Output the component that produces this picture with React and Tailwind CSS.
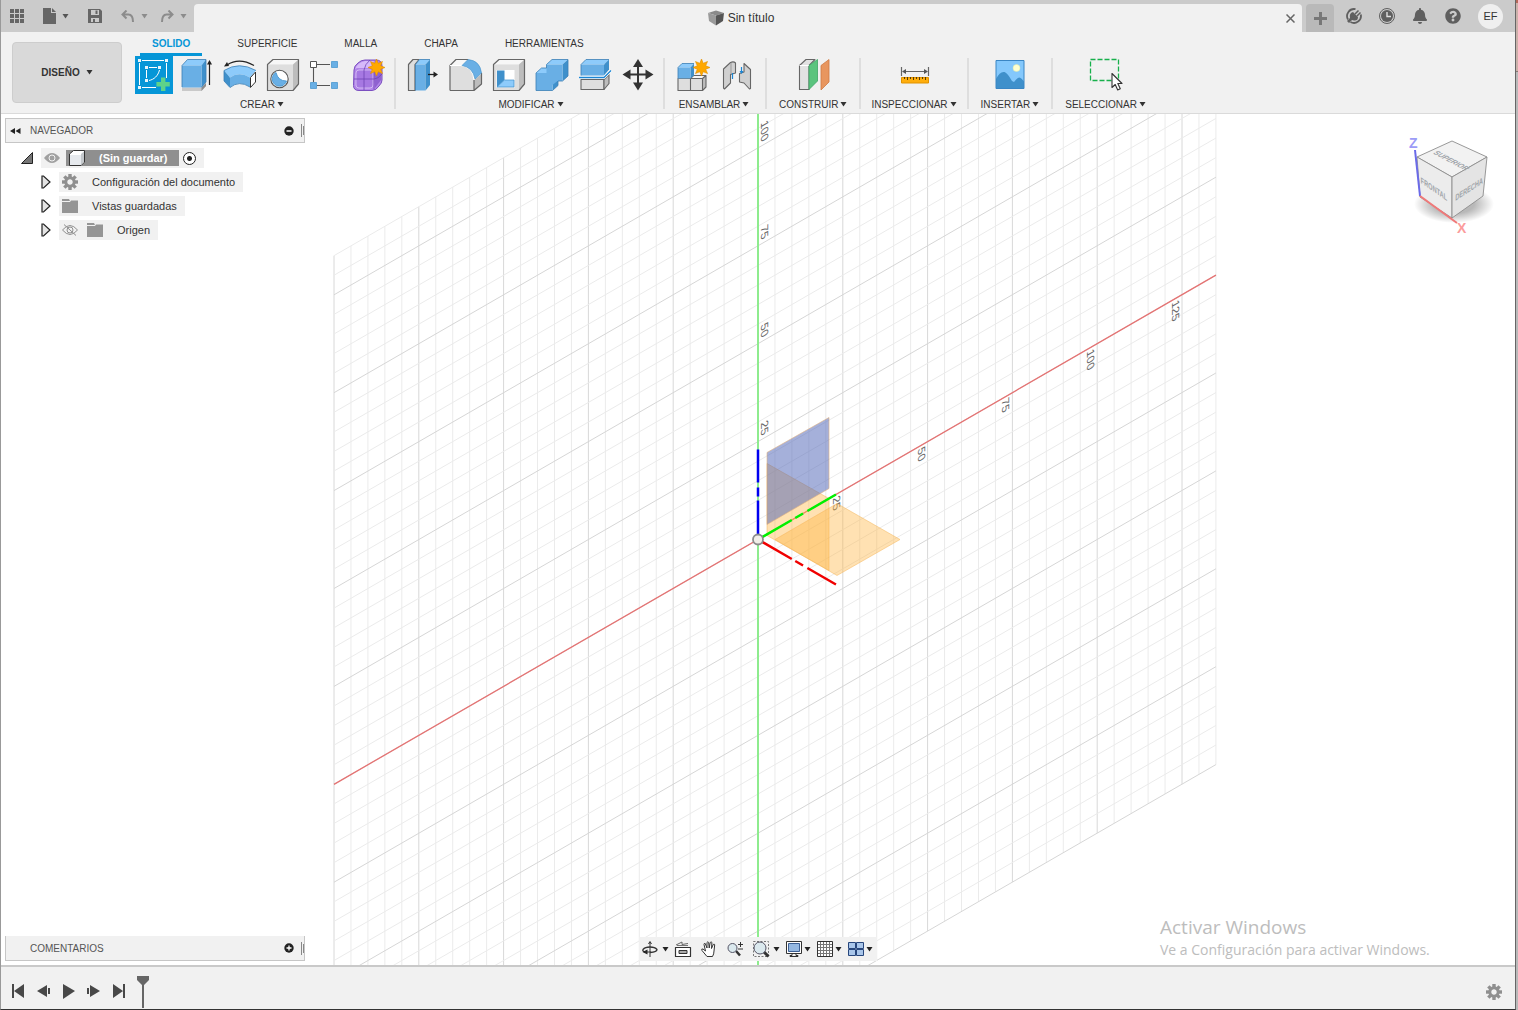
import React from "react";
import { FaBell, FaQuestionCircle } from "react-icons/fa";

const STEP_X = 16.96;
const STEP_Y = 19.58;
const SLOPE = 0.5774;
const LEFT = -25;
const RIGHT = 27;
const STAR = "0,-8.5 1.7,-4.2 6,-6 4.2,-1.7 8.5,0 4.2,1.7 6,6 1.7,4.2 0,8.5 -1.7,4.2 -6,6 -4.2,1.7 -8.5,0 -4.2,-1.7 -6,-6 -1.7,-4.2";

const range = (from, to) => Array.from({ length: to - from + 1 }, (_, i) => from + i);

const Caret = ({ className = "text-[#333]" }) => (
  <svg viewBox="0 0 7 5" className={`w-[7px] h-[5px] shrink-0 ${className}`} fill="currentColor">
    <path d="M0.500 0h6L3.500 4.500z" />
  </svg>
);

const Gear = ({ className }) => (
  <svg viewBox="-8 -8 16 16" className={className}>
    <g fill="#8f8f8f">
      {range(0, 7).map((i) => (
        <rect key={i} x="-1.7" y="-8" width="3.4" height="5" transform={`rotate(${i * 45})`} />
      ))}
    </g>
    <circle r="4.2" fill="none" stroke="#8f8f8f" strokeWidth="3" />
  </svg>
);

/* ---------- ribbon icons, all on a 43x38 cell ---------- */

const Cell = ({ children }) => (
  <svg viewBox="0 0 43 38" className="w-[43px] h-[38px]" strokeLinejoin="round">
    {children}
  </svg>
);

const Star = ({ x, y }) => (
  <polygon points={STAR} transform={`translate(${x} ${y})`} fill="#ffa800" stroke="#e08f00" strokeWidth="0.6" />
);

const SketchIcon = () => (
  <Cell>
    <rect x="2" width="38" height="38" fill="#0696d7" />
    <g stroke="#fff" fill="none" strokeWidth="1">
      <path d="M6.500 7v22M9 4.500h22M9 31.500h14M33.500 7v15M13.500 14v8M16 11.500h8" />
      <path d="M26.500 14C25 20 21 23.500 16 24.500" />
    </g>
    <g fill="#e8f4fb">
      {[[5, 3], [32, 3], [5, 30], [12, 10], [25, 10], [12, 23]].map(([x, y]) => (
        <rect key={`${x}-${y}`} x={x} y={y} width="3" height="3" />
      ))}
    </g>
    <path d="M28 21.500h4.400V26h4.400v4.400h-4.400V35H28v-4.600h-4.600V26H28z" fill="#5fd38a" />
  </Cell>
);

const ExtrudeIcon = () => (
  <Cell>
    <path d="M6 31.500h19.500l4.500-4.500v3l-4.500 5H6z" fill="#c9c9c9" />
    <path d="M25.500 31.500l4.500-4.500v3l-4.500 5z" fill="#8d8d8d" />
    <path d="M6 9.500L11.500 3.500H30l-4.500 6z" fill="#8dcbfb" />
    <path d="M25.500 9.500L30 3.500V26l-4.500 5.500z" fill="#3f90cb" />
    <path d="M6 9.500h19.500v22H6z" fill="#69afe5" />
    <path d="M6 31V9.500L11.500 3.500H30V26l-4.500 5" fill="none" stroke="#3b7fb5" strokeWidth="0.8" />
    <path d="M33.500 29V6" stroke="#222" strokeWidth="1.200" />
    <path d="M31 8.500L33.500 4 36 8.500z" fill="#222" />
  </Cell>
);

const RevolveIcon = () => (
  <Cell>
    <path d="M5 14.500Q20 5 37 14.500L31 21.500Q20 15 11 21.500z" fill="#8dcbfb" />
    <path d="M11 21.500Q20 15 31 21.500V31Q20 24 11 31.500z" fill="#69afe5" />
    <path d="M5 14.500l6 7v10l-6-6.500z" fill="#3f90cb" />
    <path d="M5 14.500Q20 5 37 14.500M5 14.500V25l6 6.500Q20 24 31 31" fill="none" stroke="#3b7fb5" strokeWidth="0.8" />
    <path d="M31.500 21.500l5-5.500v10l-5 5.500z" fill="#fff" stroke="#333" strokeWidth="1" />
    <path d="M8 9Q20 1 35 9.500" fill="none" stroke="#222" strokeWidth="1.200" />
    <path d="M5 10.500l3-4.500 2 4z" fill="#222" />
  </Cell>
);

const GrayBox = () => (
  <>
    <path d="M5.500 8.500L11 3.500h25.500l-5.500 5z" fill="#f7f7f7" />
    <path d="M31 8.500l5.500-5V28L31 34.500z" fill="#bdbdbd" />
    <path d="M5.500 8.500H31v26H5.500z" fill="#dedede" />
    <path d="M5.500 34.500v-26L11 3.500h25.500V28L31 34.500z" fill="none" stroke="#666" strokeWidth="1.200" />
  </>
);

const HoleIcon = () => (
  <Cell>
    <GrayBox />
    <circle cx="17.500" cy="23" r="8.700" fill="#fff" stroke="#555" strokeWidth="1.100" />
    <path d="M14 16.500A7.300 7.300 0 1 0 24.500 25Q16 25 14 16.500z" fill="#69afe5" stroke="#3f90cb" strokeWidth="0.800" />
  </Cell>
);

const PatternIcon = () => (
  <Cell>
    <path d="M12 8.500h13M12 29.500h13M8.500 12v14" stroke="#555" strokeWidth="1.100" />
    <rect x="5.500" y="5.500" width="6" height="6" fill="#fff" stroke="#555" />
    <g fill="#69afe5" stroke="#3f90cb" strokeWidth="0.700">
      <rect x="26.500" y="5.500" width="6" height="6" />
      <rect x="5.500" y="26.500" width="6" height="6" />
      <rect x="26.500" y="26.500" width="6" height="6" />
    </g>
  </Cell>
);

const FormIcon = () => (
  <Cell>
    <path d="M6 14q0-4 4-7 3-3 7-3h11q6 0 6 6v14q0 3-3 6-3 4.500-7 4.500H11q-5.500 0-5.500-5z" fill="#b286e8" stroke="#7b4fc0" strokeWidth="1" />
    <path d="M7 13q3-7 10-8h9l-3 7H9z" fill="#d6b9fa" />
    <path d="M26 13l7-6v17l-6 8z" fill="#8f62d0" />
    <rect x="8" y="14" width="17" height="18" rx="3" fill="#a678e2" stroke="#dcc6f8" strokeWidth="0.800" />
    <path d="M16 14v20M6 23h20q4 0 8-5M16 14q1-6 6-10M26 13v20" fill="none" stroke="#6f44b5" strokeWidth="0.800" />
    <Star x={28.5} y={11.5} />
  </Cell>
);

const PressPullIcon = () => (
  <Cell>
    <path d="M6.500 8.500L11 3.500h6L13 8.500v26H6.500z" fill="#dedede" stroke="#666" strokeWidth="1.200" />
    <path d="M13.500 8.500l4-5H28l-4.500 5z" fill="#8dcbfb" />
    <path d="M13.500 8.500h10v26h-10z" fill="#69afe5" />
    <path d="M23.500 8.500l4.500-5V29l-4.500 5.500z" fill="#3f90cb" />
    <path d="M13.500 34.500v-26l4-5H28" fill="none" stroke="#3b7fb5" strokeWidth="0.800" />
    <path d="M26 18.500h7" stroke="#222" strokeWidth="1.300" />
    <path d="M31.500 15.500l4.500 3-4.500 3z" fill="#222" />
  </Cell>
);

const FilletIcon = () => (
  <Cell>
    <path d="M5 9.500l6-6h13l-7 6z" fill="#f7f7f7" />
    <path d="M29 24l7.500-6v10L29 34.500z" fill="#bdbdbd" />
    <path d="M5 34.500v-25h10Q28 11 29 24v10.500z" fill="#dedede" />
    <path d="M5 34.500V9.500l6-6h12M29 24v10.500M5 34.500h24l7.500-6.500V17" fill="none" stroke="#666" strokeWidth="1.200" />
    <path d="M5 9.500h11Q28 11 29 24" fill="none" stroke="#fff" strokeWidth="1" />
    <path d="M17 9.500L23 3.500Q35 4.500 36.500 17L30 23Q28 11.500 17 9.500z" fill="#69afe5" stroke="#3f90cb" strokeWidth="0.600" />
  </Cell>
);

const ShellIcon = () => (
  <Cell>
    <GrayBox />
    <rect x="8.500" y="14" width="18" height="17.500" fill="#fff" />
    <path d="M9 14.500h7.500V24L9 31z" fill="#3f90cb" />
    <path d="M9 31l7.500-7H26v7z" fill="#8dcbfb" stroke="#3f90cb" strokeWidth="0.700" />
  </Cell>
);

const CombineIcon = () => (
  <Cell>
    <path d="M5 17l5.500-5H16v5zM15.500 8.500l5.500-5h16L31.500 8.500z" fill="#8dcbfb" />
    <path d="M31.500 8.500l5.500-5V20l-5.500 5zM21.500 34.500V25h5.500v4.500z" fill="#3f90cb" />
    <path d="M5 17h10.500V8.500h16V25h-5L21.500 29v5.500H5z" fill="#69afe5" />
    <path d="M5 34.500V17l5.500-5h5V8.500l5.500-5h16V20l-5.500 5H27v4.500l-5.500 5z" fill="none" stroke="#3b7fb5" strokeWidth="0.800" />
  </Cell>
);

const SplitIcon = () => (
  <Cell>
    <path d="M7 23.500h23V33.500H7z" fill="#dedede" stroke="#666" strokeWidth="1.100" />
    <path d="M30 23.500l5-5v9l-5 6z" fill="#bdbdbd" stroke="#666" strokeWidth="1.100" />
    <path d="M7 8.500l5-5h23l-5 5z" fill="#8dcbfb" />
    <path d="M30 8.500l5-5v10l-5 6z" fill="#3f90cb" />
    <path d="M7 8.500h23v11H7z" fill="#69afe5" />
    <path d="M7 19.500v-11l5-5h23" fill="none" stroke="#3b7fb5" strokeWidth="0.800" />
    <path d="M5 21.500h25l7-7" fill="none" stroke="#fff" strokeWidth="3" />
    <path d="M5 21.500h25l7-7" fill="none" stroke="#1c86d4" strokeWidth="1.300" />
  </Cell>
);

const MoveIcon = () => (
  <Cell>
    <path d="M21 8v21M10 18.500h22" stroke="#333" strokeWidth="2" />
    <path d="M21 3l5 8H16zM21 34.500l5-8H16zM5.500 18.500l8-5v10zM36.500 18.500l-8-5v10z" fill="#333" />
  </Cell>
);

const ComponentIcon = () => (
  <Cell>
    <path d="M7 22.500h12.500v12H7zM19.500 22.500h12v12h-12z" fill="#dedede" />
    <path d="M19.500 22.500l3-3H35l-3.500 3z" fill="#f7f7f7" />
    <path d="M31.500 22.500l3.500-3V31l-3.500 3.500z" fill="#bdbdbd" />
    <path d="M7 22.500h24.500v12H7zM19.500 22.500v12M22 19.500h13V31l-3.500 3.500M31.500 22.500l3.500-3M19.500 22.500l3-3" fill="none" stroke="#666" strokeWidth="1.100" />
    <path d="M7 11.500l4-4h12l-3.500 4z" fill="#8dcbfb" />
    <path d="M19.500 11.500l3.500-4v12l-3.500 3z" fill="#3f90cb" />
    <path d="M7 11.500h12.500v11H7z" fill="#69afe5" />
    <path d="M7 22.500v-11l4-4h12" fill="none" stroke="#3b7fb5" strokeWidth="0.800" />
    <Star x={30.5} y={11.5} />
  </Cell>
);

const JointIcon = () => (
  <Cell>
    <g fill="#d0d0d0" stroke="#666" strokeWidth="1.100">
      <path d="M9.500 13l7-6.500q3-1.500 5 .5v10l-5 1.500V27l-6 6-1-1z" />
      <path d="M30 7.500l6.500 6v19l-1 .5L30 27l-4.500-1v-8.500L30 16z" />
    </g>
    <path d="M17 7v11" stroke="#999" />
    <path d="M18.500 17v6M27.500 11v6" stroke="#1c86d4" strokeWidth="1.200" />
    <path d="M25.500 15h4l-2 3z" fill="#1c86d4" />
  </Cell>
);

const PlaneIcon = () => (
  <Cell>
    <path d="M7.500 9.500L14 3.500h9L17 9.500v24H7.500z" fill="#e2e2e2" stroke="#666" strokeWidth="1.100" />
    <path d="M7.500 9.500H17" stroke="#fff" />
    <path d="M17 9.500l8.500-6V25L17 33.500z" fill="#5bc47e" stroke="#3da565" strokeWidth="0.800" />
    <path d="M29 9.500l8-6V26l-8 8z" fill="#e8965f" stroke="#cf7a42" strokeWidth="0.800" />
  </Cell>
);

const MeasureIcon = () => (
  <Cell>
    <path d="M8.500 11v9M35.500 11v9M10 15.500h24" stroke="#666" strokeWidth="1.200" />
    <path d="M9 15.500l4-2.500v5zM35 15.500L31 13v5z" fill="#555" />
    <rect x="8.500" y="21.500" width="27" height="5.500" fill="#ffae0c" stroke="#e09300" />
    <path d="M11.500 21v2M14.500 21v3M17.500 21v2M20.500 21v3M23.500 21v2M26.500 21v3M29.500 21v2M32.500 21v3" stroke="#5a3b00" />
  </Cell>
);

const ImageIcon = () => (
  <Cell>
    <rect x="8" y="4.500" width="28" height="28" fill="#84c8fc" />
    <path d="M8 23q4-8 8.500-7 3 1 7.500 9l2 1q3-4 5-4.500 2 0 5 4v7H8z" fill="#3f90cb" />
    <circle cx="28.500" cy="12" r="3.500" fill="#ffffcf" stroke="#dfe8a8" strokeWidth="0.500" />
    <rect x="8" y="4.500" width="28" height="28" fill="none" stroke="#3a86c4" />
  </Cell>
);

const SelectIcon = () => (
  <Cell>
    <rect x="6.500" y="3.500" width="28" height="21" fill="none" stroke="#17b04b" strokeWidth="1.300" strokeDasharray="5 2" />
    <path d="M28 17.500v14l3.200-3 2.500 5.500 2.600-1.200-2.500-5.300H38z" fill="#fff" stroke="#333" strokeWidth="1.100" />
  </Cell>
);

const GROUPS = [
  {
    label: "CREAR",
    pad: "pl-1.5 pr-[3px]",
    tools: [["Crear boceto", SketchIcon], ["Extruir", ExtrudeIcon], ["Revolución", RevolveIcon], ["Agujero", HoleIcon], ["Patrón", PatternIcon], ["Crear forma", FormIcon]],
  },
  {
    label: "MODIFICAR",
    pad: "pl-1.5 pr-[3px]",
    tools: [["Pulsar/tirar", PressPullIcon], ["Empalme", FilletIcon], ["Vaciado", ShellIcon], ["Combinar", CombineIcon], ["Dividir cuerpo", SplitIcon], ["Mover", MoveIcon]],
  },
  { label: "ENSAMBLAR", pad: "pl-1.5 pr-2", tools: [["Nuevo componente", ComponentIcon], ["Unión", JointIcon]] },
  { label: "CONSTRUIR", pad: "px-3", tools: [["Plano de desfase", PlaneIcon]] },
  { label: "INSPECCIONAR", pad: "px-2.5", tools: [["Medir", MeasureIcon]] },
  { label: "INSERTAR", pad: "px-3", tools: [["Insertar imagen", ImageIcon]] },
  { label: "SELECCIONAR", pad: "px-3", tools: [["Seleccionar", SelectIcon]] },
];

const TABS = ["SOLIDO", "SUPERFICIE", "MALLA", "CHAPA", "HERRAMIENTAS"];

const TitleBar = () => (
  <header className="flex items-end h-8 bg-[#cbcbcb]">
    <div className="flex items-center w-[193px] h-full pl-[9px] gap-[19px] text-[#666]">
      <button type="button" aria-label="Panel de datos">
        <svg viewBox="0 0 14 14" className="size-3.5 block" fill="currentColor">
          {[0, 5, 10].map((x) => [0, 5, 10].map((y) => <rect key={`${x}${y}`} x={x} y={y} width="4" height="4" />))}
        </svg>
      </button>
      <button type="button" aria-label="Archivo" className="flex items-center gap-1.5">
        <svg viewBox="0 0 13 16" className="w-[13px] h-4" fill="currentColor">
          <path d="M0 0h8v5h5v11H0zM9 0l4 4H9z" />
        </svg>
        <Caret className="text-[#555]" />
      </button>
      <button type="button" aria-label="Guardar">
        <svg viewBox="0 0 14 14" className="size-3.5 block">
          <path d="M0 0h12l2 2v12H0z" fill="#666" />
          <path d="M3 1h8v5H3zM3 9h8v4H3z" fill="#cbcbcb" />
          <path d="M7.500 1.500h2v3.500h-2zM5 10h2v3H5z" fill="#666" />
        </svg>
      </button>
      <div className="flex gap-[13px] text-[#8c8c8c]">
        <button type="button" aria-label="Deshacer" className="flex items-center gap-[7px]">
          <svg viewBox="0 0 13 12" className="w-[13px] h-3" fill="none" stroke="currentColor" strokeWidth="2">
            <path d="M5.500 0.500L1.500 4.500l4 4M2 4.500h5.500q4.500 0 4.500 7.500" />
          </svg>
          <Caret className="text-[#8c8c8c]" />
        </button>
        <button type="button" aria-label="Rehacer" className="flex items-center gap-1.5">
          <svg viewBox="0 0 13 12" className="w-[13px] h-3" fill="none" stroke="currentColor" strokeWidth="2">
            <path d="M7.500 0.500l4 4-4 4M11 4.500H5.500Q1 4.500 1 12" />
          </svg>
          <Caret className="text-[#8c8c8c]" />
        </button>
      </div>
    </div>
    <div className="flex flex-1 items-center h-7 pl-2.5 rounded-t bg-[#f1f1f1]">
      <div className="flex flex-1 items-center justify-center gap-1 text-xs text-[#333]">
        <svg viewBox="0 0 16 16" className="size-4">
          <path d="M0 3l8-2.500L16 3 8 5.500z" fill="#8a8a8a" />
          <path d="M0 3l8 2.500V15.500L1 11z" fill="#9a9a9a" />
          <path d="M16 3L8 5.500V15.500l7-4.500z" fill="#555" />
        </svg>
        <span>Sin título</span>
      </div>
      <button type="button" aria-label="Cerrar" className="flex items-center justify-center w-6 h-7">
        <svg viewBox="0 0 9 9" className="size-[9px]" stroke="#666" strokeWidth="1.500">
          <path d="M0.500 0.500l8 8M8.500 0.500l-8 8" />
        </svg>
      </button>
    </div>
    <button type="button" aria-label="Nuevo diseño" className="flex items-center justify-center w-7 h-7 ml-1 rounded-t bg-[#b9b9b9]">
      <svg viewBox="0 0 13 13" className="size-[13px]" stroke="#777" strokeWidth="3">
        <path d="M6.500 0v13M0 6.500h13" />
      </svg>
    </button>
    <div className="flex items-center self-center gap-[17px] pl-3 pr-3 text-[#5f5f5f]">
      <button type="button" aria-label="Extensiones">
        <svg viewBox="0 0 16 16" className="size-4 block" fill="none">
          <path d="M9.500 1.200A7 7 0 0 0 2 11.500M4.500 14A7 7 0 0 0 14.800 6.500" stroke="currentColor" strokeWidth="1.800" />
          <path d="M7 4L12 9q0 4-4 3.500L6 12l-3 3-2-2 3-3Q3 5 7 4z" fill="currentColor" />
          <path d="M9 6l3.500-3.500M11 8l3.500-3.500" stroke="currentColor" strokeWidth="1.500" />
        </svg>
      </button>
      <button type="button" aria-label="Estado del trabajo">
        <svg viewBox="0 0 16 16" className="size-4 block">
          <circle cx="8" cy="8" r="7.500" fill="none" stroke="currentColor" />
          <circle cx="8" cy="8" r="6" fill="currentColor" />
          <path d="M8 4v4.500h4" fill="none" stroke="#e0e0e0" strokeWidth="1.400" />
        </svg>
      </button>
      <button type="button" aria-label="Notificaciones"><FaBell className="size-4" /></button>
      <button type="button" aria-label="Ayuda"><FaQuestionCircle className="size-4" /></button>
      <button type="button" className="size-[25px] rounded-full bg-[#efefef] text-[11px] text-[#333]">EF</button>
    </div>
  </header>
);

const Ribbon = () => (
  <div className="flex h-[82px] border-b border-[#dadada] bg-[#f1f1f1]">
    <button
      type="button"
      className="flex items-center justify-center gap-1.5 w-[110px] h-[61px] mt-2.5 ml-[11px] rounded border border-[#cdcdcd] bg-[#d9d9d9] text-[10px] font-bold text-[#333]"
    >
      DISEÑO <Caret />
    </button>
    <div className="ml-[5px]">
      <nav className="flex h-6 ml-[13px] gap-[23px]">
        {TABS.map((tab, i) => (
          <button
            key={tab}
            type="button"
            className={
              i === 0
                ? "h-6 px-3 pt-0.5 border-b-3 border-[#0696d7] text-[10px] font-bold text-[#0696d7]"
                : "h-6 px-3 pt-0.5 border-b-3 border-transparent text-[10px] text-[#333]"
            }
          >
            {tab}
          </button>
        ))}
      </nav>
      <div className="flex">
        {GROUPS.map(({ label, pad, tools }) => (
          <div key={label} className="flex group">
            <div className={`flex flex-col items-center ${pad}`}>
              <div className="flex">
                {tools.map(([name, Icon]) => (
                  <button key={name} type="button" aria-label={name}><Icon /></button>
                ))}
              </div>
              <button type="button" className="flex items-center gap-0.5 h-5 text-[10px] text-[#333] whitespace-nowrap">
                {label} <Caret />
              </button>
            </div>
            <div className="w-0.5 h-[51px] mt-0.5 bg-[#dedede] group-last:hidden" />
          </div>
        ))}
      </div>
    </div>
  </div>
);

const AxisLabel = ({ x, y, anchor, children }) => (
  <text transform={`matrix(0 1 -0.866 0.5 ${x} ${y})`} textAnchor={anchor} fontSize="12" fill="#686868">
    {children}
  </text>
);

const AXIS_DASH = "39 4 9 5 33";

const Viewport = () => (
  <svg viewBox="-757 -425 1514 850" className="absolute inset-0 size-full overflow-visible" fill="none">
    {range(LEFT, RIGHT).map((i) => {
      const x = i * STEP_X;
      return (
        <line
          key={i}
          x1={x}
          x2={x}
          y1={-SLOPE * x - 27 * STEP_Y}
          y2={-SLOPE * x + 25 * STEP_Y}
          stroke={i % 5 === 0 ? "#d8d8d8" : "#ebebeb"}
        />
      );
    })}
    {range(-27, 25).map((i) => (
      <line
        key={i}
        x1={LEFT * STEP_X}
        x2={RIGHT * STEP_X}
        y1={-SLOPE * LEFT * STEP_X + i * STEP_Y}
        y2={-SLOPE * RIGHT * STEP_X + i * STEP_Y}
        stroke={i % 5 === 0 ? "#d6d6d6" : "#ebebeb"}
      />
    ))}
    <line x1="0" x2="0" y1={-27 * STEP_Y} y2={25 * STEP_Y} stroke="#8eec8e" strokeWidth="2" />
    <line
      x1={LEFT * STEP_X}
      x2={RIGHT * STEP_X}
      y1={-SLOPE * LEFT * STEP_X}
      y2={-SLOPE * RIGHT * STEP_X}
      stroke="#e57373"
      strokeWidth="1.300"
    />
    {[1, 2, 3, 4].map((n) => (
      <AxisLabel key={n} x={3} y={-n * 5 * STEP_Y - 5} anchor="end">{n * 25}</AxisLabel>
    ))}
    {[1, 2, 3, 4, 5].map((n) => (
      <AxisLabel key={n} x={n * 5 * STEP_X - 10} y={-SLOPE * n * 5 * STEP_X + 8} anchor="start">{n * 25}</AxisLabel>
    ))}
    <g fill="#ffb53e" fillOpacity="0.400" stroke="#f5b65a" strokeOpacity="0.500">
      <polygon points="9,-76 71,-41 71,31 9,-4" />
      <polygon points="17,0 79,-36 142,0 79,36" />
    </g>
    <polygon points="71,-122 9,-87 9,-15 71,-51" fill="#4b61b5" fillOpacity="0.500" stroke="#e0b080" strokeOpacity="0.600" />
    <g strokeWidth="2.500" strokeDasharray={AXIS_DASH}>
      <path d="M0 0V-90" stroke="#0000f0" />
      <path d="M0 0L78 -45" stroke="#00f000" />
      <path d="M0 0L78 45" stroke="#f00000" />
    </g>
    <circle r="5" fill="#f1eee8" stroke="#8c8c8c" strokeWidth="1.800" />
  </svg>
);

const ViewCube = () => (
  <svg viewBox="0 0 110 110" className="absolute top-4 right-[5px] size-[110px]">
    <defs>
      <radialGradient id="cube-shadow">
        <stop offset="0.500" stopColor="#000" stopOpacity="0.280" />
        <stop offset="1" stopColor="#000" stopOpacity="0" />
      </radialGradient>
    </defs>
    <ellipse cx="54" cy="74" rx="40" ry="19" fill="url(#cube-shadow)" />
    <g stroke="#8d8d8d" strokeWidth="0.900" strokeLinejoin="round">
      <polygon points="52,11 87,27 52,47 17,27" fill="#f2f2f2" />
      <polygon points="17,27 52,47 52,88 20,67" fill="#ececec" />
      <polygon points="87,27 52,47 52,88 83,66" fill="#e4e4e4" />
    </g>
    <g fill="#a0a4a9" fontSize="8" fontWeight="bold" textAnchor="middle">
      <text transform="matrix(0.79 0.42 -0.9 0.5 49 32)">SUPERIOR</text>
      <text transform="matrix(0.7 0.48 0.04 1.1 34 62)">FRONTAL</text>
      <text transform="matrix(0.7 -0.45 -0.04 1.1 69 62)">DERECHA</text>
    </g>
    <path d="M15 20L20 66" stroke="#6a6ae8" strokeWidth="2" />
    <path d="M20 66L57 93" stroke="#f07878" strokeWidth="2" />
    <text x="9" y="18" fontSize="14" fontWeight="bold" fill="#9c9cf7">Z</text>
    <text x="57" y="103" fontSize="14" fontWeight="bold" fill="#fb9c9c">X</text>
  </svg>
);

const Grip = () => (
  <svg viewBox="0 0 3 13" className="w-[3px] h-[13px] ml-[7px]" stroke="#888">
    <path d="M0.500 0v13M2.500 2v9" />
  </svg>
);

const Folder = () => (
  <svg viewBox="0 0 16 14" className="w-4 h-3.5" fill="#959595">
    <path d="M0 0h7l1 2H0zM0 3h8l1-1.500h7V14H0z" />
  </svg>
);

const Expand = () => (
  <button type="button" aria-label="Expandir" className="w-[18px] shrink-0">
    <svg viewBox="0 0 10 14" className="w-2.5 h-3.5 block" fill="#e4e4e4" stroke="#222" strokeWidth="1.200">
      <path d="M1 1h1.500L9 7l-6.500 6H1z" />
    </svg>
  </button>
);

const Eye = ({ off }) => (
  <svg viewBox="0 0 16 12" className="w-4 h-3">
    {off ? (
      <g fill="none" stroke="#8f8f8f">
        <path d="M0.500 6Q8-3 15.500 6 8 15 0.500 6zM2 0.500L14 11.500" />
        <circle cx="8" cy="6" r="3" />
      </g>
    ) : (
      <g>
        <path d="M0 6Q8-4 16 6 8 16 0 6z" fill="#a0a0a0" />
        <circle cx="8" cy="6" r="3" fill="#a0a0a0" stroke="#f1f1f1" />
      </g>
    )}
  </svg>
);

const TreeRow = ({ icons, label }) => (
  <li className="flex items-center h-6 pl-9">
    <Expand />
    <div className="flex items-center h-5 pl-[3px] pr-2 bg-[#f1f1f1]">
      {icons}
      <span className="ml-3.5 text-[11px] text-[#333]">{label}</span>
    </div>
  </li>
);

const Navigator = () => (
  <aside className="absolute top-1 left-1 w-[300px]">
    <div className="flex items-center h-[25px] pl-1 border border-[#c6c6c6] bg-[#f1f1f1]">
      <button type="button" aria-label="Contraer panel">
        <svg viewBox="0 0 11 6" className="w-[11px] h-1.5 block" fill="#222">
          <path d="M5 0v6L0 3zM10.500 0v6L5.500 3z" />
        </svg>
      </button>
      <h2 className="flex-1 ml-[9px] text-[10px] text-[#555]">NAVEGADOR</h2>
      <button type="button" aria-label="Minimizar">
        <svg viewBox="0 0 10 10" className="size-2.5 block">
          <circle cx="5" cy="5" r="4.700" fill="#222" />
          <path d="M2.500 5h5" stroke="#fff" strokeWidth="1.500" />
        </svg>
      </button>
      <Grip />
    </div>
    <ul className="mt-[3px]">
      <li className="flex items-center h-6 pl-4">
        <button type="button" aria-label="Contraer" className="w-5">
          <svg viewBox="0 0 12 12" className="size-3 block">
            <path d="M0.500 11.500h11V0.500z" fill="#777" stroke="#222" />
          </svg>
        </button>
        <div className="flex items-center h-5 pl-[3px] pr-2 bg-[#f1f1f1]">
          <Eye />
          <div className="flex items-center h-4 ml-1.5 pl-[3px] pr-3 bg-[#8f8f8f]">
            <svg viewBox="0 0 16 16" className="size-4" strokeLinejoin="round">
              <path d="M0.500 4l4-3.500h11V12l-3.500 3.500H0.500z" fill="#fff" stroke="#333" />
              <path d="M12 4v11l3-3V1.500z" fill="#c4c8cc" />
              <path d="M1 5h11v10H1z" fill="#e6e9ed" />
            </svg>
            <span className="ml-3.5 text-[11px] font-bold text-white">(Sin guardar)</span>
          </div>
          <input
            type="radio"
            aria-label="Activar componente"
            defaultChecked
            className="appearance-none size-[13px] ml-1 rounded-full border border-[#222] bg-[radial-gradient(#222_0_2px,#fff_3px)]"
          />
        </div>
      </li>
      <TreeRow icons={<Gear className="size-4" />} label="Configuración del documento" />
      <TreeRow icons={<Folder />} label="Vistas guardadas" />
      <TreeRow icons={<div className="flex items-center gap-[9px]"><Eye off /><Folder /></div>} label="Origen" />
    </ul>
  </aside>
);

const Comments = () => (
  <section className="absolute bottom-1 left-1 flex items-center w-[300px] h-[25px] pl-6 border border-t-0 border-[#c6c6c6] bg-[#f1f1f1]">
    <h2 className="flex-1 text-[10px] text-[#555]">COMENTARIOS</h2>
    <button type="button" aria-label="Añadir comentario">
      <svg viewBox="0 0 10 10" className="size-2.5 block">
        <circle cx="5" cy="5" r="4.700" fill="#222" />
        <path d="M2.500 5h5M5 2.500v5" stroke="#fff" strokeWidth="1.300" />
      </svg>
    </button>
    <Grip />
  </section>
);

const ViewTool = ({ name, menu, className, children }) => (
  <button type="button" aria-label={name} className={`flex items-center ${className}`}>
    <svg viewBox="0 0 18 18" className="size-[18px]" fill="none" stroke="#333" strokeLinejoin="round">
      {children}
    </svg>
    {menu && <Caret className="text-[#222]" />}
  </button>
);

const ViewBar = () => (
  <div className="absolute bottom-1 left-1/2 -translate-x-1/2 flex items-center w-[238px] h-6 pl-0.5 bg-[#f1f1f1]">
    <ViewTool name="Orbitar" menu className="gap-[3px] mr-[5px]">
      <path d="M9 2v15M7.500 4L9 1.500 10.500 4" />
      <path d="M4 12Q1 11 2 9.500 4 7 9 7t7 2.500Q16 12 9 12.500" strokeWidth="1.300" />
      <path d="M6.500 9.500L1.500 12l5 2.500z" fill="#222" stroke="none" />
      <path d="M4 12h6" />
    </ViewTool>
    <ViewTool name="Mirar a" className="mr-2">
      <path d="M1.500 7.500h15v9h-15z" fill="#fff" strokeWidth="1.200" />
      <path d="M5 10.500h8v3H5z" fill="#aaa" />
      <path d="M2 5l6-3v2.500l6-1" stroke="#666" />
      <path d="M3 5.500h11" stroke="#777" />
    </ViewTool>
    <ViewTool name="Encuadre" className="mr-2">
      <path
        d="M7 16.500L2 10.500q-1-2 1-1.500l2.500 2L4 4.500q0-1.500 1.200-1L7 8V2.500q.8-1.500 1.700 0L9.200 8l1-5.500q1-1.300 1.700 0L11.500 8.500 13.200 4.500q1.200-1 1.500.3L14 11q0 3-1.500 5.500z"
        fill="#fff"
      />
    </ViewTool>
    <ViewTool name="Zoom" className="mr-2">
      <path d="M10 11l4 4.500" strokeWidth="2.500" />
      <circle cx="6.500" cy="8" r="4.500" fill="#dbe9ee" stroke="#556" />
      <path d="M12 4.500h5M14.500 2v5M12 9h5" />
    </ViewTool>
    <ViewTool name="Ajustar" menu className="gap-[3px] mr-[5px]">
      <rect x="1.500" y="1.500" width="15" height="15" stroke="#777" strokeDasharray="2 1.500" />
      <path d="M12 12l4.500 4.500" strokeWidth="3" />
      <circle cx="8" cy="8" r="6" fill="#dbe9ee" stroke="#556" />
    </ViewTool>
    <ViewTool name="Configuración de visualización" menu className="gap-px mr-[5px]">
      <path d="M1.500 1.500h15v12h-15z" fill="#fff" />
      <path d="M3.500 3.500h11v8h-11z" fill="#95b8e2" stroke="#3c5f94" />
      <path d="M7 13.500v2h-2v1h8v-1h-2v-2" />
    </ViewTool>
    <ViewTool name="Rejilla y forzado de cursor" menu className="gap-px mr-[5px]">
      <path d="M1.500 1.500h15v15h-15z" fill="#fff" />
      <path d="M4.500 2v14M7.500 2v14M10.500 2v14M13.500 2v14M2 4.500h14M2 7.500h14M2 10.500h14M2 13.500h14" stroke="#777" />
    </ViewTool>
    <ViewTool name="Ventanas gráficas" menu className="gap-px">
      <g fill="#a9c6ea" stroke="#27467c">
        <rect x="1.500" y="2.500" width="7" height="6" />
        <rect x="9.500" y="2.500" width="7" height="6" />
        <rect x="1.500" y="9.500" width="7" height="6" />
        <rect x="9.500" y="9.500" width="7" height="6" />
      </g>
    </ViewTool>
  </div>
);

const PLAYBACK = [
  ["Ir al inicio", "M0 0h2v14H0zM12 0v14L2 7z"],
  ["Retroceder", "M10 1v12L0 7zM11 4h2v6h-2z"],
  ["Reproducir", "M1 0v15l12-8z"],
  ["Avanzar", "M3 1v12L13 7zM0 4h2v6H0z"],
  ["Ir al final", "M11 0h2v14h-2zM1 0v14L11 7z"],
];

const Timeline = () => (
  <footer className="flex items-center justify-between h-[44px] pl-[11px] pr-[13px] border-t-2 border-[#c9c9c9] bg-[#f1f1f1]">
    <div className="flex items-center gap-3">
      {PLAYBACK.map(([name, d]) => (
        <button key={name} type="button" aria-label={name} className="mt-[7px]">
          <svg viewBox="0 0 13 15" className="w-[13px] h-[15px] block" fill="#484848"><path d={d} /></svg>
        </button>
      ))}
      <svg viewBox="0 0 12 32" className="w-3 h-8 mt-2" fill="#666">
        <path d="M0 0h12v4L7 9v23H5V9L0 4z" />
      </svg>
    </div>
    <button type="button" aria-label="Preferencias de línea de tiempo" className="mt-[7px]">
      <Gear className="size-4 block" />
    </button>
  </footer>
);

const App = () => (
  <div className="flex h-screen overflow-hidden bg-[#b9b9b9] font-['Liberation_Sans',Arial,sans-serif]">
    <div className="flex flex-col flex-1 min-w-0 border-l border-r border-b border-l-[#999] border-r-[#666] border-b-[#333]">
      <TitleBar />
      <Ribbon />
      <main className="relative flex-1 overflow-hidden bg-white">
        <Viewport />
        <Navigator />
        <ViewCube />
        <Comments />
        <ViewBar />
        <div className="absolute right-20 bottom-1 w-[275px] font-['Open_Sans','Noto_Sans',sans-serif] text-[#bdbdbd] whitespace-nowrap">
          <p className="text-[19px] leading-6">Activar Windows</p>
          <p className="text-sm leading-[22px]">Ve a Configuración para activar Windows.</p>
        </div>
      </main>
      <Timeline />
    </div>
    <div className="w-0.5 bg-[#b9b9b9]">
      <div className="h-[72px] border-t-3 border-b border-t-[#b5685a] border-b-[#8a7a76] bg-[#cbb1aa]" />
    </div>
  </div>
);

export default App;
